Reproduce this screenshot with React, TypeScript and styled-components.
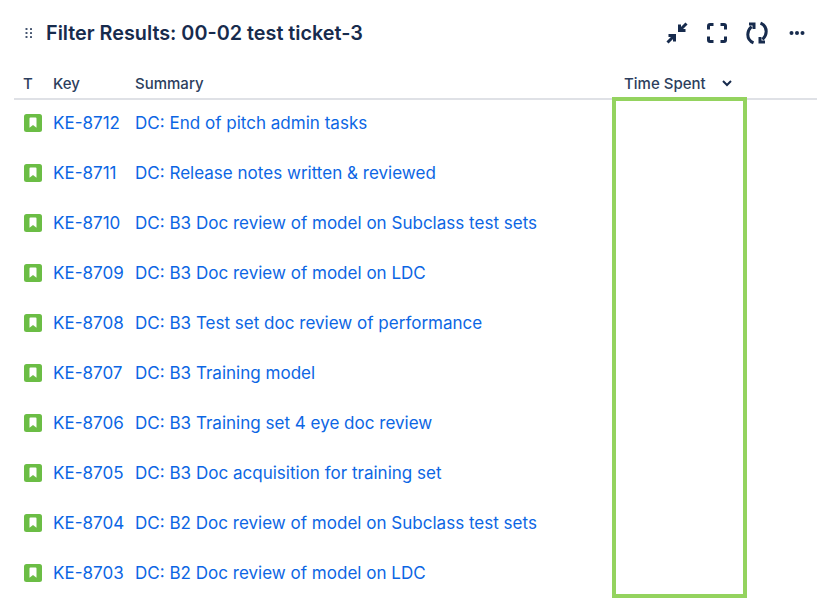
import React from 'react';
import styled, { createGlobalStyle } from 'styled-components';

const ISSUES = [
  { key: 'KE-8712', summary: 'DC: End of pitch admin tasks' },
  { key: 'KE-8711', summary: 'DC: Release notes written & reviewed' },
  { key: 'KE-8710', summary: 'DC: B3 Doc review of model on Subclass test sets' },
  { key: 'KE-8709', summary: 'DC: B3 Doc review of model on LDC' },
  { key: 'KE-8708', summary: 'DC: B3 Test set doc review of performance' },
  { key: 'KE-8707', summary: 'DC: B3 Training model' },
  { key: 'KE-8706', summary: 'DC: B3 Training set 4 eye doc review' },
  { key: 'KE-8705', summary: 'DC: B3 Doc acquisition for training set' },
  { key: 'KE-8704', summary: 'DC: B2 Doc review of model on Subclass test sets' },
  { key: 'KE-8703', summary: 'DC: B2 Doc review of model on LDC' },
];

const GlobalStyle = createGlobalStyle`
  html, body {
    margin: 0;
    background: #fff;
    overflow: hidden;
  }
  body {
    font-family: Inter, "Liberation Sans", sans-serif;
    color: #172b4d;
  }
`;

const Page = styled.div`
  position: relative;
  width: 818px;
  height: 599px;
  overflow: hidden;
  padding: 18px 1px 0 14px;
  box-sizing: border-box;
`;

const Header = styled.header`
  display: flex;
  align-items: center;
  height: 30px;
  padding-left: 9px;
  margin-bottom: 20px;
`;

const Title = styled.h2`
  flex: 1;
  margin: 0 0 0 11px;
  font-size: 19.8px;
  font-weight: 600;
  line-height: 30px;
`;

const Actions = styled.div`
  display: flex;
  align-items: center;
  gap: 16px;
  padding-right: 8px;
`;

const IconButton = styled.button`
  display: flex;
  padding: 0;
  border: 0;
  background: none;
  color: #172b4d;
`;

const Table = styled.div`
  display: flex;
  flex-direction: column;
`;

const Row = styled.div`
  display: grid;
  grid-template-columns: 39px 82px 489px 1fr;
  align-items: center;
`;

const HeadRow = styled(Row)`
  height: 30px;
  border-bottom: 2px solid #dfe1e6;
  box-sizing: content-box;
`;

const HeadCell = styled.div<{ $inset?: number }>`
  display: flex;
  align-items: center;
  padding-left: ${p => p.$inset ?? 0}px;
  font-size: 15px;
  font-weight: 500;
  color: #2c3e5d;
  white-space: nowrap;
`;

const SortIcon = styled.svg`
  margin-left: 15px;
`;

const IssueRow = styled(Row)`
  height: 50px;
  padding-bottom: 4px;
  box-sizing: border-box;
`;

const TypeCell = styled.div`
  display: flex;
  padding-left: 10px;
`;

const IssueLink = styled.a`
  font-size: 17.05px;
  line-height: 20px;
  color: #0c66e4;
  white-space: nowrap;
  text-decoration: none;
`;

const Highlight = styled.div`
  position: absolute;
  left: 612px;
  top: 97px;
  width: 135px;
  height: 501px;
  border: 4px solid #94d35f;
  box-sizing: border-box;
`;

const DragHandle = () => (
  <svg width="12" height="14" viewBox="0 0 12 14" fill="#44546f">
    {[2, 6, 10].map(y => (
      <React.Fragment key={y}>
        <rect x="2.5" y={y} width="2" height="2" rx="0.6" />
        <rect x="7" y={y} width="2" height="2" rx="0.6" />
      </React.Fragment>
    ))}
  </svg>
);

const StoryIcon = () => (
  <svg width="18" height="18" viewBox="0 0 18 18">
    <rect width="18" height="18" rx="2.5" fill="#6bbd45" />
    <path d="M5.5 4.5a1 1 0 0 1 1-1h5a1 1 0 0 1 1 1v9.2L9 11l-3.5 2.7z" fill="#fff" />
  </svg>
);

const strokeProps = {
  fill: 'none',
  stroke: 'currentColor',
  strokeWidth: 3,
};

const CollapseIcon = () => (
  <svg width="24" height="24" viewBox="0 0 24 24" {...strokeProps}>
    <path d="M21.500 2.500 14.500 9.500M14.500 3.500v6h6" />
    <path d="M2.500 21.500l7-7M3.500 14.500h6v6" />
  </svg>
);

const ExpandIcon = () => (
  <svg width="24" height="24" viewBox="0 0 24 24" {...strokeProps}>
    <path d="M8.500 3.500H5a1.500 1.500 0 0 0-1.500 1.500V8.500" />
    <path d="M15.500 3.500H19a1.500 1.500 0 0 1 1.500 1.500V8.500" />
    <path d="M8.500 20.500H5a1.500 1.500 0 0 1-1.500-1.500V15.500" />
    <path d="M15.500 20.500H19a1.500 1.500 0 0 0 1.500-1.500V15.500" />
  </svg>
);

const RefreshIcon = () => (
  <svg width="24" height="24" viewBox="0 0 24 24" {...strokeProps}>
    <path d="M8.500 21.800C4.800 20.300 2.800 17 2.800 13.500 2.800 10.500 4 8 6.500 5.500" />
    <path d="M4 3H9V8" />
    <path d="M15.500 2.200C19.200 3.700 21.200 7 21.200 10.500 21.200 13.500 20 16 17.500 18.500" />
    <path d="M20 21H15V16" />
  </svg>
);

const MoreIcon = () => (
  <svg width="24" height="24" viewBox="0 0 24 24" fill="currentColor">
    <circle cx="6.500" cy="12" r="2" />
    <circle cx="12" cy="12" r="2" />
    <circle cx="17.500" cy="12" r="2" />
  </svg>
);

export default function App() {
  return (
    <>
      <GlobalStyle />
      <Page>
        <Header>
          <DragHandle />
          <Title>Filter Results: 00-02 test ticket-3</Title>
          <Actions>
            <IconButton><CollapseIcon /></IconButton>
            <IconButton><ExpandIcon /></IconButton>
            <IconButton><RefreshIcon /></IconButton>
            <IconButton><MoreIcon /></IconButton>
          </Actions>
        </Header>
        <Table>
          <HeadRow>
            <HeadCell $inset={9}>T</HeadCell>
            <HeadCell>Key</HeadCell>
            <HeadCell>Summary</HeadCell>
            <HeadCell>
              Time Spent
              <SortIcon width="12" height="8" viewBox="0 0 12 8" fill="none" stroke="#172b4d" strokeWidth="2">
                <path d="M2 2l4 4 4-4" />
              </SortIcon>
            </HeadCell>
          </HeadRow>
          {ISSUES.map(issue => (
            <IssueRow key={issue.key}>
              <TypeCell><StoryIcon /></TypeCell>
              <IssueLink href="#">{issue.key}</IssueLink>
              <IssueLink href="#">{issue.summary}</IssueLink>
            </IssueRow>
          ))}
        </Table>
        <Highlight />
      </Page>
    </>
  );
}
